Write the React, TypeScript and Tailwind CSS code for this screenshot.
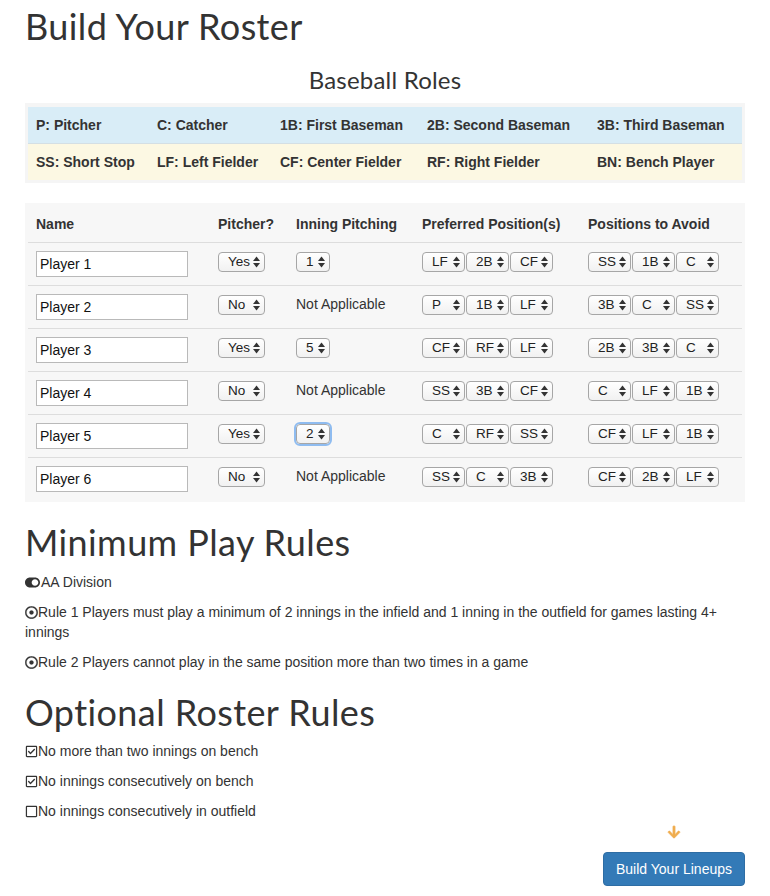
import { FaToggleOn, FaRegDotCircle, FaRegCheckSquare, FaRegSquare, FaArrowDown } from 'react-icons/fa'

const heading = { fontFamily: 'Lato, "Open Sans", sans-serif' }

const roleRows = [
  ['P: Pitcher', 'C: Catcher', '1B: First Baseman', '2B: Second Baseman', '3B: Third Baseman'],
  ['SS: Short Stop', 'LF: Left Fielder', 'CF: Center Fielder', 'RF: Right Fielder', 'BN: Bench Player'],
]
const roleWidths = ['w-[121px]', 'w-[123px]', 'w-[147px]', 'w-[170px]', 'flex-1']

const players = [
  { name: 'Player 1', pitcher: 'Yes', inning: '1', pref: ['LF', '2B', 'CF'], avoid: ['SS', '1B', 'C'] },
  { name: 'Player 2', pitcher: 'No', inning: '', pref: ['P', '1B', 'LF'], avoid: ['3B', 'C', 'SS'] },
  { name: 'Player 3', pitcher: 'Yes', inning: '5', pref: ['CF', 'RF', 'LF'], avoid: ['2B', '3B', 'C'] },
  { name: 'Player 4', pitcher: 'No', inning: '', pref: ['SS', '3B', 'CF'], avoid: ['C', 'LF', '1B'] },
  { name: 'Player 5', pitcher: 'Yes', inning: '2', pref: ['C', 'RF', 'SS'], avoid: ['CF', 'LF', '1B'], focus: true },
  { name: 'Player 6', pitcher: 'No', inning: '', pref: ['SS', 'C', '3B'], avoid: ['CF', '2B', 'LF'] },
]

function Arrows() {
  return (
    <svg width="7" height="12" viewBox="0 0 7 12" className="shrink-0">
      <path d="M3.5 0.5 L7 5 L0 5 Z" fill="#333" />
      <path d="M3.5 11.5 L7 7 L0 7 Z" fill="#333" />
    </svg>
  )
}

function FakeSelect({ value, width, focus }: { value: string; width: string; focus?: boolean }) {
  return (
    <div
      className={`${width} h-[20px] mt-[1px] flex items-center justify-between pl-[9px] pr-[4px] rounded-[4px] border border-[#a6a6a6] bg-gradient-to-b from-white to-[#f1f1f1] text-[13.5px] text-[#222] ${
        focus ? 'outline outline-[2px] outline-[#8fbcf0]' : ''
      }`}
    >
      <span>{value}</span>
      <Arrows />
    </div>
  )
}

export default function App() {
  return (
    <div className="w-[720px] mx-auto text-[#333] text-[14px] leading-[20px]" style={{ fontFamily: '"Liberation Sans", Arial, sans-serif' }}>
      <h1 className="text-[36px] leading-[40px] pt-[6px] tracking-[0.4px]" style={heading}>
        Build Your Roster
      </h1>
      <h3 className="text-center text-[24px] leading-[28px] mt-[20px] tracking-[0.2px]" style={heading}>
        Baseball Roles
      </h3>

      <div className="mt-[9px] bg-[#f5f5f5] pt-[4px] pb-[3px] px-[3px]">
        {roleRows.map((row, i) => (
          <div key={i} className={`flex font-bold ${i === 0 ? 'bg-[#d9edf7] border-b border-[#d4dfe4]' : 'bg-[#fcf8e3]'}`}>
            {row.map((r, j) => (
              <div key={j} className={`${roleWidths[j]} px-2 py-2`}>
                {r}
              </div>
            ))}
          </div>
        ))}
      </div>

      <div className="mt-[20px] bg-[#f7f7f7] pt-[3px] pb-[2px] px-[3px]">
        <div className="flex font-bold border-b border-[#dddddd]">
          <div className="w-[182px] px-2 py-2">Name</div>
          <div className="w-[78px] px-2 py-2">Pitcher?</div>
          <div className="w-[126px] px-2 py-2">Inning Pitching</div>
          <div className="w-[166px] px-2 py-2">Preferred Position(s)</div>
          <div className="flex-1 px-2 py-2">Positions to Avoid</div>
        </div>
        {players.map((p, i) => (
          <div key={i} className={`flex items-start ${i < players.length - 1 ? 'border-b border-[#dddddd]' : ''}`}>
            <div className="w-[182px] px-2 py-2">
              <div className="w-[152px] h-[26px] border border-[#b9b9b9] bg-white pl-[3px] flex items-center text-[14px] text-[#111]">{p.name}</div>
            </div>
            <div className="w-[78px] px-2 py-2">
              <FakeSelect value={p.pitcher} width="w-[47px]" />
            </div>
            <div className="w-[126px] px-2 py-2">
              {p.inning ? <FakeSelect value={p.inning} width="w-[34px]" focus={p.focus} /> : <span>Not Applicable</span>}
            </div>
            <div className="w-[166px] px-2 py-2 flex gap-[1px]">
              {p.pref.map((v, j) => (
                <FakeSelect key={j} value={v} width="w-[43px]" />
              ))}
            </div>
            <div className="flex-1 px-2 py-2 flex gap-[1px]">
              {p.avoid.map((v, j) => (
                <FakeSelect key={j} value={v} width="w-[43px]" />
              ))}
            </div>
          </div>
        ))}
      </div>

      <h1 className="text-[36px] leading-[40px] mt-[20px] tracking-[0.4px]" style={heading}>
        Minimum Play Rules
      </h1>
      <div className="mt-[10px] flex flex-col gap-[10px]">
        <p className="flex items-center">
          <FaToggleOn className="text-[15px] mr-[1px]" />
          AA Division
        </p>
        <p>
          <FaRegDotCircle className="inline text-[13px] align-[-2px] stroke-[12px] stroke-current" />
          Rule 1 Players must play a minimum of 2 innings in the infield and 1 inning in the outfield for games lasting 4+ innings
        </p>
        <p>
          <FaRegDotCircle className="inline text-[13px] align-[-2px] stroke-[12px] stroke-current" />
          Rule 2 Players cannot play in the same position more than two times in a game
        </p>
      </div>

      <h1 className="text-[36px] leading-[40px] mt-[20px] tracking-[0.4px]" style={heading}>
        Optional Roster Rules
      </h1>
      <div className="mt-[9px] flex flex-col gap-[10px]">
        <p className="flex items-center">
          <FaRegCheckSquare className="text-[13px]" />
          No more than two innings on bench
        </p>
        <p className="flex items-center">
          <FaRegCheckSquare className="text-[13px]" />
          No innings consecutively on bench
        </p>
        <p className="flex items-center">
          <FaRegSquare className="text-[13px]" />
          No innings consecutively in outfield
        </p>
      </div>

      <div className="flex flex-col items-end mt-[4px] pb-[8px]">
        <div className="flex flex-col items-center">
          <FaArrowDown className="text-[#f0ad4e] text-[14px] stroke-[20px] stroke-current" />
          <button className="mt-[13px] bg-[#337ab7] border border-[#2e6da4] rounded-[4px] text-white px-3 py-[6px] leading-[20px]">
            Build Your Lineups
          </button>
        </div>
      </div>
    </div>
  )
}
